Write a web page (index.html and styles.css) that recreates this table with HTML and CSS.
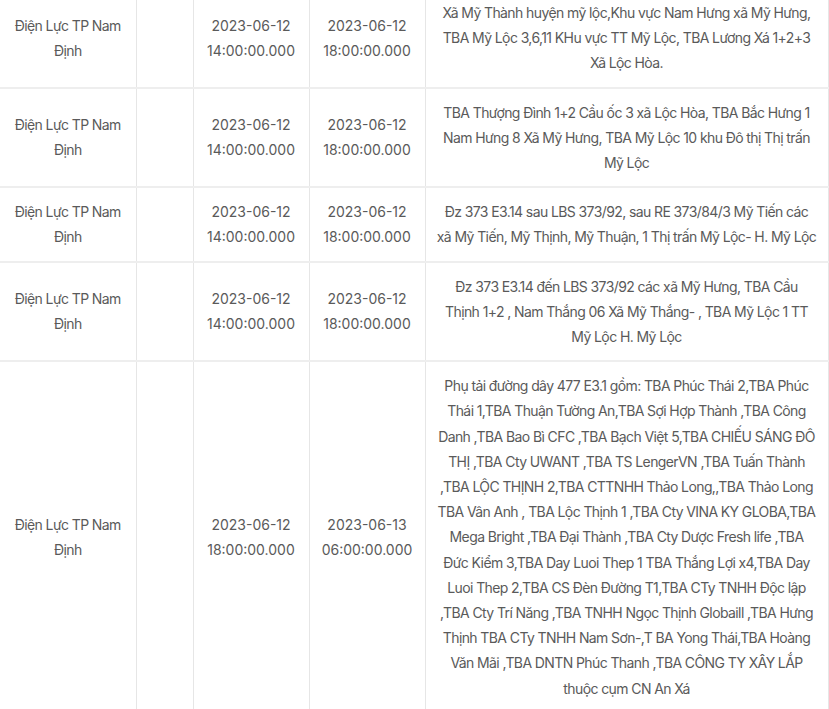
FILE: index.html
```html
<!DOCTYPE html>
<html lang="vi">
<head>
<meta charset="utf-8">
<title>Lịch cắt điện</title>
<link rel="stylesheet" href="styles.css">
</head>
<body>
<table class="schedule">
  <colgroup>
    <col class="c-unit">
    <col class="c-empty">
    <col class="c-date">
    <col class="c-date">
    <col class="c-area">
  </colgroup>
  <tbody>
    <tr>
      <td class="unit">Điện Lực TP Nam<br>Định</td>
      <td></td>
      <td class="date">2023-06-12<br>14:00:00.000</td>
      <td class="date">2023-06-12<br>18:00:00.000</td>
      <td class="area">Xã Mỹ Thành huyện mỹ lộc,Khu vực Nam Hưng xã Mỹ Hưng,<br>TBA Mỹ Lộc 3,6,11 KHu vực TT Mỹ Lộc, TBA Lương Xá 1+2+3<br>Xã Lộc Hòa.</td>
    </tr>
    <tr>
      <td class="unit">Điện Lực TP Nam<br>Định</td>
      <td></td>
      <td class="date">2023-06-12<br>14:00:00.000</td>
      <td class="date">2023-06-12<br>18:00:00.000</td>
      <td class="area">TBA Thượng Đình 1+2 Cầu ốc 3 xã Lộc Hòa, TBA Bắc Hưng 1<br>Nam Hưng 8 Xã Mỹ Hưng, TBA Mỹ Lộc 10 khu Đô thị Thị trấn<br>Mỹ Lộc</td>
    </tr>
    <tr>
      <td class="unit">Điện Lực TP Nam<br>Định</td>
      <td></td>
      <td class="date">2023-06-12<br>14:00:00.000</td>
      <td class="date">2023-06-12<br>18:00:00.000</td>
      <td class="area">Đz 373 E3.14 sau LBS 373/92, sau RE 373/84/3 Mỹ Tiến các<br>xã Mỹ Tiến, Mỹ Thịnh, Mỹ Thuận, 1 Thị trấn Mỹ Lộc- H. Mỹ Lộc</td>
    </tr>
    <tr>
      <td class="unit">Điện Lực TP Nam<br>Định</td>
      <td></td>
      <td class="date">2023-06-12<br>14:00:00.000</td>
      <td class="date">2023-06-12<br>18:00:00.000</td>
      <td class="area">Đz 373 E3.14 đến LBS 373/92 các xã Mỹ Hưng, TBA Cầu<br>Thịnh 1+2 , Nam Thắng 06 Xã Mỹ Thắng- , TBA Mỹ Lộc 1 TT<br>Mỹ Lộc H. Mỹ Lộc</td>
    </tr>
    <tr>
      <td class="unit">Điện Lực TP Nam<br>Định</td>
      <td></td>
      <td class="date">2023-06-12<br>18:00:00.000</td>
      <td class="date">2023-06-13<br>06:00:00.000</td>
      <td class="area">Phụ tải đường dây 477 E3.1 gồm: TBA Phúc Thái 2,TBA Phúc<br>Thái 1,TBA Thuận Tường An,TBA Sợi Hợp Thành ,TBA Công<br>Danh ,TBA Bao Bì CFC ,TBA Bạch Việt 5,TBA CHIẾU SÁNG ĐÔ<br>THỊ ,TBA Cty UWANT ,TBA TS LengerVN ,TBA Tuấn Thành<br>,TBA LỘC THỊNH 2,TBA CTTNHH Thảo Long,,TBA Thảo Long<br>TBA Vân Anh , TBA Lộc Thịnh 1 ,TBA Cty VINA KY GLOBA,TBA<br>Mega Bright ,TBA Đại Thành ,TBA Cty Dược Fresh life ,TBA<br>Đức Kiểm 3,TBA Day Luoi Thep 1 TBA Thắng Lợi x4,TBA Day<br>Luoi Thep 2,TBA CS Đèn Đường T1,TBA CTy TNHH Độc lập<br>,TBA Cty Trí Năng ,TBA TNHH Ngọc Thịnh Globaill ,TBA Hưng<br>Thịnh TBA CTy TNHH Nam Sơn-,T BA Yong Thái,TBA Hoàng<br>Văn Mãi ,TBA DNTN Phúc Thanh ,TBA CÔNG TY XÂY LẮP<br>thuộc cụm CN An Xá</td>
    </tr>
  </tbody>
</table>
</body>
</html>
```
FILE: styles.css
```css
html, body {
  margin: 0;
  padding: 0;
  background: #ffffff;
}

body {
  font-family: Inter, "Noto Sans", "DejaVu Sans", sans-serif;
  font-size: 14px;
  color: #5a5a5a;
  overflow: hidden;
}

.schedule {
  width: 828px;
  margin-top: -11px;
  border-collapse: collapse;
  table-layout: fixed;
}

.c-unit { width: 136px; }
.c-empty { width: 57px; }
.c-date { width: 116px; }
.c-area { width: 403px; }

.schedule td {
  padding: 11px 6px;
  line-height: 25.2px;
  text-align: center;
  vertical-align: middle;
  border-left: 1px solid #e6e6e6;
  border-right: 1px solid #e6e6e6;
  border-bottom: 2px solid #eeeeee;
}

.schedule td.unit {
  border-left: none;
  letter-spacing: -0.6px;
  white-space: nowrap;
}

.schedule td.date {
  letter-spacing: 0;
  white-space: nowrap;
}

.schedule td.area {
  letter-spacing: -0.6px;
  white-space: nowrap;
}
```
